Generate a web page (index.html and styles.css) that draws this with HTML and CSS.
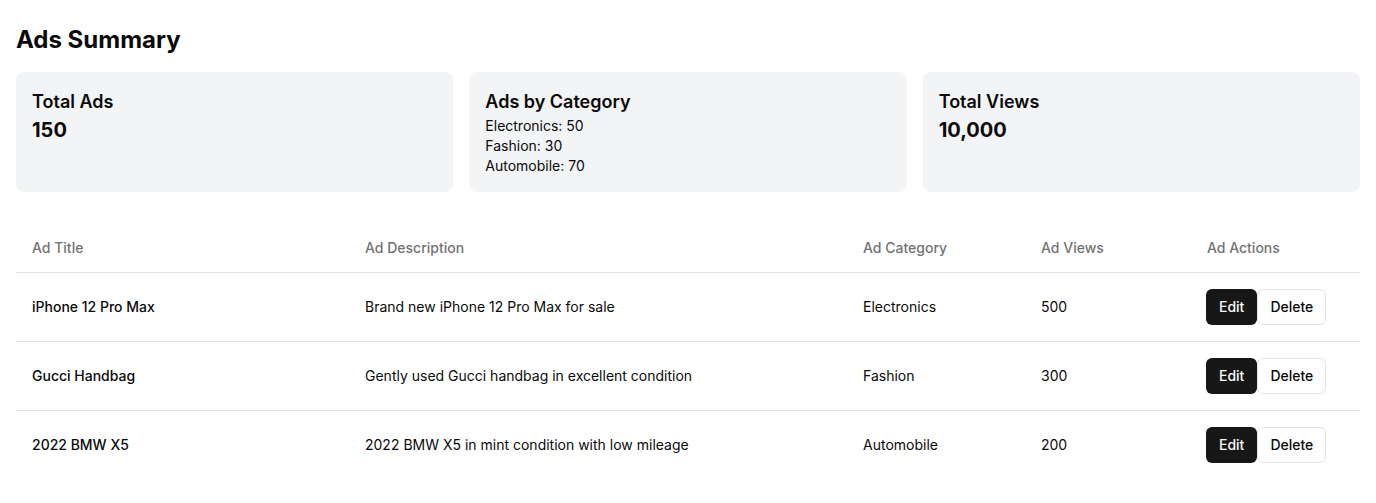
FILE: index.html
```html
<!DOCTYPE html>
<html>
<head>
<meta charset="utf-8">
<link rel="stylesheet" href="styles.css">
</head>
<body>
<div class="page">
  <h1 class="title">Ads Summary</h1>
  <div class="cards">
    <div class="card">
      <h2 class="card-title">Total Ads</h2>
      <p class="card-value">150</p>
    </div>
    <div class="card">
      <h2 class="card-title">Ads by Category</h2>
      <ul class="cat-list">
        <li>Electronics: 50</li>
        <li>Fashion: 30</li>
        <li>Automobile: 70</li>
      </ul>
    </div>
    <div class="card">
      <h2 class="card-title">Total Views</h2>
      <p class="card-value">10,000</p>
    </div>
  </div>
  <table class="ads">
    <thead>
      <tr>
        <th class="c1">Ad Title</th>
        <th class="c2">Ad Description</th>
        <th class="c3">Ad Category</th>
        <th class="c4">Ad Views</th>
        <th class="c5">Ad Actions</th>
      </tr>
    </thead>
    <tbody>
      <tr>
        <td class="strong">iPhone 12 Pro Max</td>
        <td>Brand new iPhone 12 Pro Max for sale</td>
        <td>Electronics</td>
        <td>500</td>
        <td><div class="actions"><button class="btn edit">Edit</button><button class="btn del">Delete</button></div></td>
      </tr>
      <tr>
        <td class="strong">Gucci Handbag</td>
        <td>Gently used Gucci handbag in excellent condition</td>
        <td>Fashion</td>
        <td>300</td>
        <td><div class="actions"><button class="btn edit">Edit</button><button class="btn del">Delete</button></div></td>
      </tr>
      <tr>
        <td class="strong">2022 BMW X5</td>
        <td>2022 BMW X5 in mint condition with low mileage</td>
        <td>Automobile</td>
        <td>200</td>
        <td><div class="actions"><button class="btn edit">Edit</button><button class="btn del">Delete</button></div></td>
      </tr>
    </tbody>
  </table>
</div>
</body>
</html>
```

FILE: styles.css
```css
* { box-sizing: border-box; }
html, body { margin: 0; padding: 0; background: #fff; }
body {
  font-family: Inter, "Noto Sans", "Liberation Sans", sans-serif;
  color: #0a0a0a;
}
.page { padding: 24px 16px 16px; }
.title {
  margin: 0 0 16px;
  font-size: 24px;
  line-height: 32px;
  font-weight: 700;
}
.cards {
  display: grid;
  grid-template-columns: repeat(3, 1fr);
  gap: 16px;
}
.card {
  background: #f3f4f6;
  border-radius: 8px;
  padding: 16px;
  height: 120px;
}
.card-title {
  margin: 0;
  font-size: 18px;
  line-height: 28px;
  font-weight: 600;
}
.card-value {
  margin: 0;
  font-size: 20px;
  line-height: 28px;
  font-weight: 700;
}
.cat-list {
  list-style: none;
  margin: 0;
  padding: 0;
  font-size: 14px;
  line-height: 20px;
}
.ads {
  width: 100%;
  margin-top: 32px;
  border-collapse: collapse;
  font-size: 14px;
  line-height: 20px;
}
.ads th {
  height: 48px;
  padding: 0 16px;
  text-align: left;
  font-weight: 500;
  color: #737373;
  border-bottom: 1px solid #e5e5e5;
}
.ads td {
  padding: 16px;
  border-bottom: 1px solid #e5e5e5;
  vertical-align: middle;
}
.ads tbody tr:last-child td { border-bottom: none; }
.c1 { width: 333px; }
.c2 { width: 498px; }
.c3 { width: 178px; }
.c4 { width: 166px; }
.c5 { width: 169px; }
.strong { font-weight: 500; }
.actions { display: flex; margin-left: -1px; }
.btn {
  height: 36px;
  padding: 0 12px;
  font-family: inherit;
  font-size: 14px;
  font-weight: 500;
  border-radius: 6px;
  cursor: pointer;
}
.edit {
  background: #171717;
  color: #fafafa;
  border: none;
  padding: 0 13px;
}
.del {
  background: #fff;
  color: #0a0a0a;
  border: 1px solid #e5e5e5;
}
```
